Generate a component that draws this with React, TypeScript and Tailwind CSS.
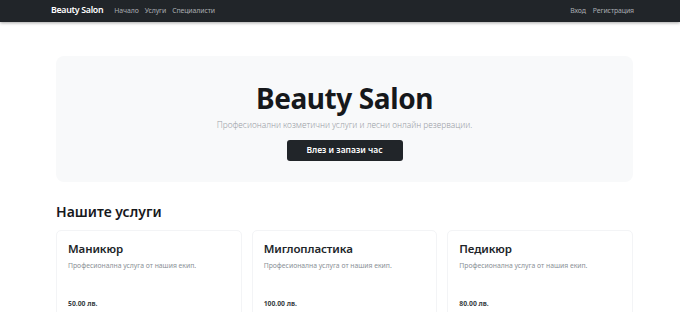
import React from "react";

const font = { fontFamily: '"Noto Sans", "Open Sans", sans-serif' };

function Card({ title, price }: { title: string; price: string }) {
  return (
    <div className="border border-[#f3f4f6] rounded-[5px] px-[11px] pt-[10px] h-[110px] flex flex-col bg-white">
      <div className="text-[11.5px] font-semibold text-[#212529] leading-[16px] tracking-[-0.1px]">{title}</div>
      <div className="text-[6.8px] text-[#8a9096] mt-[4px] leading-[10px]">Професионална услуга от нашия екип.</div>
      <div className="text-[6.8px] font-bold text-[#3a3f44] mt-[28px] leading-[10px]">{price}</div>
    </div>
  );
}

export default function App() {
  const link = "text-[6.9px] text-[#a9adb1] tracking-[-0.1px]";
  return (
    <div className="w-[680px] h-[312px] overflow-hidden bg-white" style={font}>
      <nav className="h-[22px] bg-[#212529] shadow-[0_1px_3px_rgba(0,0,0,0.35)] relative">
        <div className="ml-[51px] w-[583px] h-full flex items-center justify-between">
          <div className="flex items-center">
            <span className="text-white text-[8.8px] font-semibold tracking-[-0.3px]">Beauty Salon</span>
            <span className={"ml-[11px] " + link}>Начало</span>
            <span className={"ml-[6px] " + link}>Услуги</span>
            <span className={"ml-[6px] " + link}>Специалисти</span>
          </div>
          <div className="flex items-center">
            <span className={link}>Вход</span>
            <span className={"ml-[7px] " + link}>Регистрация</span>
          </div>
        </div>
      </nav>
      <div className="ml-[56px] w-[577px]">
        <div className="mt-[34px] h-[126px] bg-[#f8f9fa] rounded-[8px] flex flex-col items-center pt-[24px]">
          <div className="text-[28px] font-bold text-[#16181b] leading-[36px] tracking-[-0.4px]">Beauty Salon</div>
          <div className="text-[8.4px] font-light text-[#9aa0a6] leading-[12px] mt-[3px]">Професионални козметични услуги и лесни онлайн резервации.</div>
          <div className="mt-[9px] w-[116px] h-[21px] bg-[#212529] rounded-[3px] flex items-center justify-center text-white text-[8.5px] font-semibold">
            Влез и запази час
          </div>
        </div>
        <div className="mt-[20px] text-[14px] font-semibold text-[#16181b] leading-[20px]">Нашите услуги</div>
        <div className="mt-[8px] grid grid-cols-3 gap-[10px]">
          <Card title="Маникюр" price="50.00 лв." />
          <Card title="Миглопластика" price="100.00 лв." />
          <Card title="Педикюр" price="80.00 лв." />
        </div>
      </div>
    </div>
  );
}
